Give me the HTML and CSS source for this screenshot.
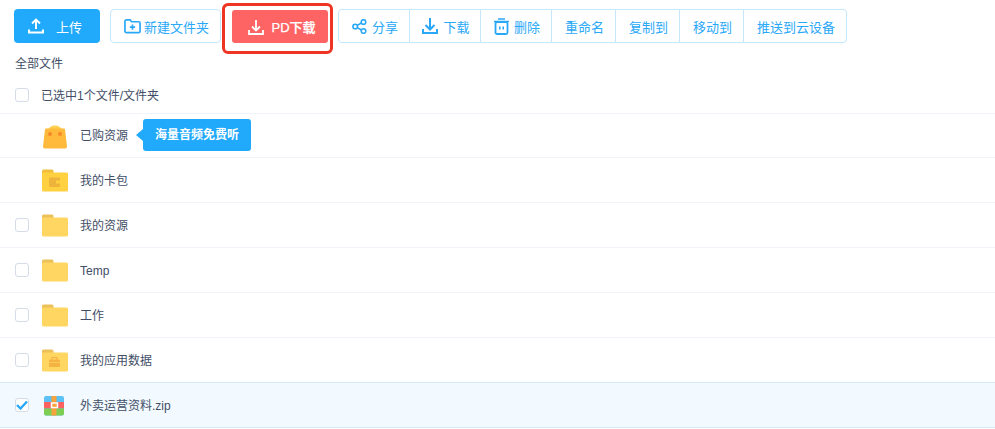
FILE: index.html
```html
<!DOCTYPE html>
<html lang="zh-CN">
<head>
    <meta charset="UTF-8">
    <meta name="viewport" content="width=device-width, initial-scale=1.0">
    <title>全部文件</title>
    <link rel="stylesheet" href="styles.css">
</head>
<body>
    <!-- 工具栏 -->
    <div class="toolbar">
        <button type="button" class="btn-upload">
            <svg width="16" height="16" viewBox="0 0 16 16"><path d="M8 11V2M4 5.500 8 1.600l4 3.900" fill="none" stroke="#fff" stroke-width="2"/><path d="M1 11.500v3h14v-3" fill="none" stroke="#fff" stroke-width="2"/></svg>
            <span>上传</span>
        </button>
        <button type="button" class="btn-new">
            <svg width="17" height="16" viewBox="0 0 18 16"><path d="M1 3a1.500 1.500 0 0 1 1.500-1.500h4L8 3.500h7.500A1.500 1.500 0 0 1 17 5v8.500a1.500 1.500 0 0 1-1.500 1.500h-13A1.500 1.500 0 0 1 1 13.500z" fill="none" stroke="#2aa8f8" stroke-width="1.800"/><path d="M9 6.500v5.500M6.200 9.200h5.600" stroke="#2aa8f8" stroke-width="1.800"/></svg>
            新建文件夹
        </button>
        <div class="mark">
            <button type="button" class="btn-pd">
                <svg width="16" height="16" viewBox="0 0 16 16"><path d="M8 1v10M4 7.500 8 11.500l4-4" fill="none" stroke="#fff" stroke-width="1.800"/><path d="M1 11v4h14v-4" fill="none" stroke="#fff" stroke-width="1.800"/></svg>
                PD下载
            </button>
        </div>
        <div class="group">
            <a class="w71">
                <svg width="15" height="15" viewBox="0 0 15 15"><g fill="none" stroke="#2aa8f8" stroke-width="1.600"><circle cx="3.200" cy="7.500" r="2.300"/><circle cx="11.500" cy="3" r="2.300"/><circle cx="11.500" cy="12" r="2.300"/><path d="M5.200 6.400 9.500 4M5.200 8.600 9.500 11"/></g></svg>
                分享
            </a>
            <a class="w71">
                <svg width="16" height="16" viewBox="0 0 16 16"><path d="M8 0v11M3.500 7 8 11.500 12.500 7" fill="none" stroke="#2aa8f8" stroke-width="2"/><path d="M1 11v4h14v-4" fill="none" stroke="#2aa8f8" stroke-width="2"/></svg>
                下载
            </a>
            <a class="w71">
                <svg width="15" height="17" viewBox="0 0 15 17"><path d="M4 1h7M0 3.500h15" stroke="#2aa8f8" stroke-width="1.600"/><rect x="1.500" y="4" width="12" height="12" rx="1.500" fill="none" stroke="#2aa8f8" stroke-width="1.800"/><path d="M5.800 8.500v3M9.200 8.500v3" stroke="#2aa8f8" stroke-width="1.600"/></svg>
                删除
            </a>
            <a class="w64">重命名</a>
            <a class="w64">复制到</a>
            <a class="w64">移动到</a>
            <a class="w-last">推送到云设备</a>
        </div>
    </div>

    <div class="crumb">全部文件</div>

    <!-- 文件列表 -->
    <div class="head-row">
        <span class="check"></span>
        <span>已选中1个文件/文件夹</span>
    </div>
    <ul class="files">
        <li class="file first">
            <span class="check none"></span>
            <svg class="icon" width="28" height="26" viewBox="0 0 28 26"><path d="M7 7C8 4 10.500 2.500 14 2.500s6 1.500 7 4.500z" fill="#ffcf4f"/><path d="M5 5.500h18a1 1 0 0 1 1 1L26 23.500a2 2 0 0 1-2 2H4a2 2 0 0 1-2-2L4 6.500a1 1 0 0 1 1-1z" fill="#ffb93b"/><circle cx="9" cy="11" r="2" fill="#f78b2a"/><circle cx="19" cy="11" r="2" fill="#f78b2a"/></svg>
            <span class="name">已购资源</span>
            <span class="tip">海量音频免费听</span>
        </li>
        <li class="file">
            <span class="check none"></span>
            <svg class="icon" width="28" height="23" viewBox="0 0 28 23"><path d="M1 2a1.500 1.500 0 0 1 1.500-1.500h8.500a1.500 1.500 0 0 1 1.500 1.500v3H1z" fill="#f2bf3c"/><rect x="1" y="3.500" width="26" height="19" rx="1.500" fill="#ffd040"/><rect x="8" y="8.500" width="11" height="9.500" rx="1" fill="#eeb33a"/><rect x="15" y="11.500" width="4" height="3" fill="#ffd040"/></svg>
            <span class="name">我的卡包</span>
        </li>
        <li class="file">
            <span class="check"></span>
            <svg class="icon" width="28" height="23" viewBox="0 0 28 23"><use href="#folder"/></svg>
            <span class="name">我的资源</span>
        </li>
        <li class="file">
            <span class="check"></span>
            <svg class="icon" width="28" height="23" viewBox="0 0 28 23"><use href="#folder"/></svg>
            <span class="name">Temp</span>
        </li>
        <li class="file">
            <span class="check"></span>
            <svg class="icon" width="28" height="23" viewBox="0 0 28 23"><use href="#folder"/></svg>
            <span class="name">工作</span>
        </li>
        <li class="file">
            <span class="check"></span>
            <svg class="icon" width="28" height="23" viewBox="0 0 28 23"><use href="#folder"/><rect x="8" y="10.500" width="11" height="7.500" rx="1" fill="#f5b342"/><path d="M11 11V8.500h5V11" fill="none" stroke="#f5b342" stroke-width="1.200"/><path d="M8 13.500h11" stroke="#ffd662" stroke-width=".7"/></svg>
            <span class="name">我的应用数据</span>
        </li>
        <li class="file selected">
            <span class="check on">
                <svg width="12" height="10" viewBox="0 0 12 10"><path d="M1 5l3.500 3.500L11 1.500" fill="none" stroke="#2aa8f8" stroke-width="2.400"/></svg>
            </span>
            <svg class="icon" width="28" height="22" viewBox="0 0 28 22"><rect x="3" y="2" width="20" height="19.500" rx="2" fill="#5cc2f6"/><path d="M3 8h20v6.500H3z" fill="#fb6260"/><path d="M3 14.500h20v5a2 2 0 0 1-2 2H5a2 2 0 0 1-2-2z" fill="#7fce54"/><path d="M10.500 2h5v19.500h-5z" fill="#f5a33c"/><rect x="10.500" y="9" width="6" height="4.500" fill="#f5a33c" stroke="#fff" stroke-width="1.500"/></svg>
            <span class="name">外卖运营资料.zip</span>
        </li>
    </ul>

    <svg class="defs" width="0" height="0">
        <symbol id="folder" viewBox="0 0 28 23">
            <path d="M1 2a1.500 1.500 0 0 1 1.500-1.500h8.500a1.500 1.500 0 0 1 1.500 1.500v3H1z" fill="#ecc15a"/>
            <rect x="1" y="3.500" width="26" height="19" rx="1.500" fill="#ffd662"/>
        </symbol>
    </svg>
</body>
</html>
```

FILE: styles.css
```css
* {
    box-sizing: border-box;
}
body {
    margin: 0;
    font-family: "Liberation Sans", "Noto Sans CJK SC", sans-serif;
    font-size: 12px;
    color: #424e67;
    background-color: #fff;
    overflow: hidden;
}
button {
    font: inherit;
    border: none;
    display: flex;
    align-items: center;
    justify-content: center;
    cursor: pointer;
}
.toolbar {
    display: flex;
    align-items: flex-start;
    padding: 3px 0 0 14px;
    height: 52px;
    font-size: 13px;
}
.btn-upload {
    width: 86px;
    height: 34px;
    margin-top: 6px;
    padding: 0 4px 0 0;
    gap: 12px;
    border-radius: 4px;
    color: #fff;
    background-color: #21a9fb;
    font-size: 13px;
}
.btn-new {
    width: 111px;
    height: 34px;
    margin: 6px 1px 0 10px;
    padding: 0 0 0 2px;
    gap: 3px;
    border: 1px solid #c3e7fd;
    border-radius: 4px;
    color: #2aa8f8;
    background-color: #fff;
}
.mark {
    width: 111px;
    height: 51px;
    padding: 4px 0 0 7px;
    margin-right: 5px;
    flex: none;
    border: 3px solid #ee3524;
    border-radius: 6px;
}
.btn-pd {
    width: 96px;
    height: 33px;
    padding: 0 0 0 4px;
    gap: 7px;
    border-radius: 3px;
    color: #fff;
    font-weight: 500;
    -webkit-text-stroke: 0.25px #fff;
    background-color: #ff6464;
}
.group {
    display: flex;
    width: 509px;
    height: 34px;
    margin-top: 6px;
    border: 1px solid #c3e7fd;
    border-radius: 4px;
    color: #2aa8f8;
}
.group a {
    display: flex;
    align-items: center;
    justify-content: center;
    gap: 5px;
    padding-left: 2px;
    border-right: 1px solid #c3e7fd;
    height: 100%;
}
.group .w71 {
    width: 71px;
}
.group .w64 {
    width: 64px;
}
.group .w-last {
    flex: 1;
    border-right: none;
}
.crumb {
    height: 22px;
    padding: 1px 0 0 15px;
    line-height: 22px;
}
.head-row {
    display: flex;
    align-items: center;
    gap: 12px;
    height: 39px;
    padding: 2px 0 0 15px;
}
.check {
    display: flex;
    align-items: center;
    justify-content: center;
    flex: none;
    width: 14px;
    height: 14px;
    border: 1px solid #d5dce8;
    border-radius: 3px;
    background-color: #fff;
}
.check.none {
    visibility: hidden;
}
.files {
    margin: 0;
    padding: 0;
    list-style: none;
}
.file {
    display: flex;
    align-items: center;
    height: 45px;
    padding-left: 15px;
    border-top: 1px solid #f1f3f8;
}
.file.first {
    height: 44px;
}
.file.selected {
    border-top: 1px solid #d6e9fa;
    border-bottom: 1px solid #d6e9fa;
    background-color: #f3faff;
    height: 46px;
}
.icon {
    flex: none;
    margin-left: 12px;
}
.name {
    margin-left: 11px;
    padding-top: 2px;
    line-height: 16px;
}
.first .name {
    padding-top: 0;
}
.tip {
    position: relative;
    margin: 0 0 2px 15px;
    padding: 0 12px;
    height: 32px;
    line-height: 32px;
    border-radius: 3px;
    font-weight: bold;
    color: #fff;
    background-color: #21a9fb;
}
.tip::before {
    content: "";
    position: absolute;
    left: -7px;
    top: 10px;
    border: 6px solid transparent;
    border-left: none;
    border-right: 7px solid #21a9fb;
}
.defs {
    position: absolute;
}
```
